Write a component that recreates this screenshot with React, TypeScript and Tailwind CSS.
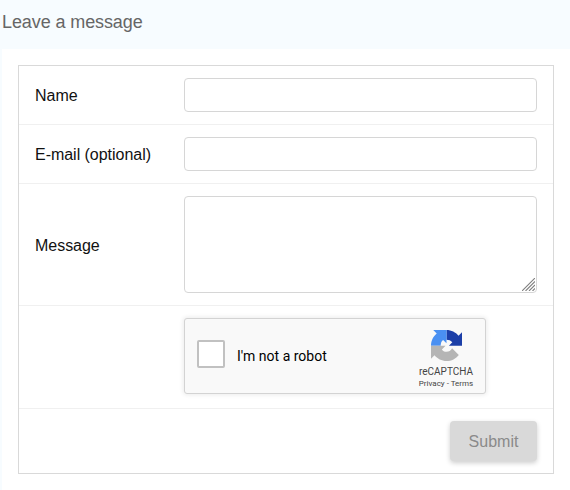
import type { ReactNode } from "react";

function Row({ label, height, children }: { label?: string; height: string; children: ReactNode }) {
  return (
    <div className={`flex border-b border-[#f0f0f0] pl-4 pr-4 pt-3 ${height}`}>
      <div className="flex w-[149px] shrink-0 items-center pb-[10px] text-base text-[#111] tracking-[-0.03px] whitespace-nowrap">{label}</div>
      {children}
    </div>
  );
}

function Logo() {
  return (
    <svg width="31" height="31" viewBox="0 0 64 64">
      <path fill="#1c3fa8" d="M32 0C42 0 51 4.700 56.800 11.800L64 4.700V32.500H37l7-7C41 21.500 37 20 32 20Z" />
      <path fill="#4a90f2" d="M32 0H4.600l7.200 7.200C4.600 13 0 22 0 32.500h20C20 27 21.500 23 25 20.500l7 7Z" />
      <path fill="#b5b5b5" d="M0 32.500v26.800l7.200-7.200C13 59.300 22 64 32 64c10.400 0 19.600-5 25.400-12.600L43.500 37.500C41 42 37 45 32 45c-4.500 0-7.500-2-9.500-5l7.500-7.500Z" />
    </svg>
  );
}

export default function App() {
  return (
    <div className="flex h-[490px] w-[570px] flex-col overflow-hidden bg-[#f7fcff] font-['Liberation_Sans',Arial,sans-serif]">
      <header className="h-[49px] shrink-0 pl-[2px] pt-2 text-lg leading-7 tracking-[-0.1px] text-[#666]">Leave a message</header>
      <main className="ml-[2px] min-h-0 grow bg-white px-4 pt-4">
        <form className="h-[409px] w-[536px] border border-[#d9d9d9]">
          <Row label="Name" height="h-[59px]">
            <input aria-label="Name" className="h-[34px] w-[353px] rounded border border-[#d6d6d6]" />
          </Row>
          <Row label="E-mail (optional)" height="h-[59px]">
            <input aria-label="E-mail" className="h-[34px] w-[353px] rounded border border-[#d6d6d6]" />
          </Row>
          <Row label="Message" height="h-[122px]">
            <div className="relative h-[97px] w-[353px]">
              <textarea aria-label="Message" className="block h-full w-full resize-none rounded border border-[#d6d6d6]" />
              <svg className="absolute bottom-[2px] right-[2px]" width="13" height="13" viewBox="0 0 13 13" stroke="#808080" strokeWidth="1.1" fill="none">
                <path d="M0 13 13 0M3.500 13 13 3.500M7 13l6-6M10.500 13l2.500-2.500" />
              </svg>
            </div>
          </Row>
          <Row height="h-[103px]">
            <div className="flex h-[76px] w-[302px] rounded-[3px] border border-[#d3d3d3] bg-[#f9f9f9] pl-3 shadow-[0_0_4px_1px_rgba(0,0,0,0.08)]">
              <div className="mt-[21px] size-7 rounded-[2px] border-2 border-[#c1c1c1] bg-white" />
              <div className="ml-3 mt-7 w-[170px] font-[Roboto,sans-serif] text-sm leading-[18px] text-black">I'm not a robot</div>
              <div className="flex w-[78px] flex-col items-center pt-[11px] font-[Roboto,sans-serif] text-[#444]">
                <Logo />
                <div className="mt-[5px] text-[10px] leading-3">reCAPTCHA</div>
                <div className="mt-px text-[8px] leading-[10px]">Privacy - Terms</div>
              </div>
            </div>
          </Row>
          <div className="flex h-16 justify-end pr-4 pt-3">
            <button type="button" className="h-10 w-[87px] rounded bg-[#d9d9d9] pt-px text-base text-[#8a8a8a] shadow-[0_2px_5px_rgba(0,0,0,0.2)]">Submit</button>
          </div>
        </form>
      </main>
    </div>
  );
}
